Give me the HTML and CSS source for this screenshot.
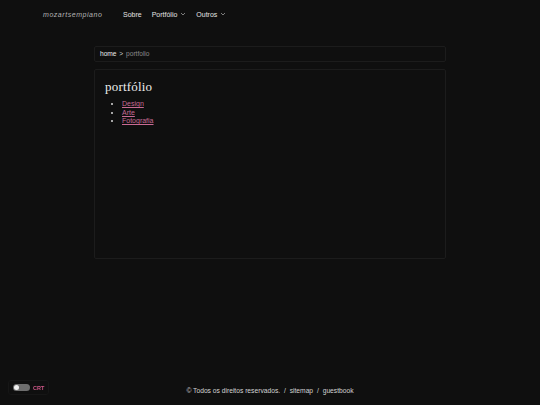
FILE: index.html
```html
<!DOCTYPE html>
<html lang="pt">
<head>
    <meta charset="UTF-8">
    <meta name="viewport" content="width=device-width, initial-scale=1.0">
    <title>portfólio</title>
    <link rel="stylesheet" href="styles.css">
</head>
<body>
    <header class="topo">
        <a class="logo" href="#">mozartsempiano</a>
        <nav class="menu">
            <a href="#">Sobre</a>
            <a href="#">Portfólio <svg class="seta" viewBox="0 0 6 4"><path d="M1 1l2 2 2-2" fill="none" stroke="#999" stroke-width="0.8"/></svg></a>
            <a href="#">Outros <svg class="seta" viewBox="0 0 6 4"><path d="M1 1l2 2 2-2" fill="none" stroke="#999" stroke-width="0.8"/></svg></a>
        </nav>
    </header>

    <main class="conteudo">
        <div class="caminho">
            <a href="#" class="caminho_home">home</a>
            <span class="caminho_sep">&gt;</span>
            <span class="caminho_atual">portfolio</span>
        </div>
        <section class="caixa">
            <h1>portfólio</h1>
            <ul class="lista">
                <li><a href="#">Design</a></li>
                <li><a href="#">Arte</a></li>
                <li><a href="#">Fotografia</a></li>
            </ul>
        </section>
    </main>

    <footer class="rodape">
        <span>&copy; Todos os direitos reservados.</span>
        <span class="barra">/</span>
        <a href="#">sitemap</a>
        <span class="barra">/</span>
        <a href="#">guestbook</a>
    </footer>

    <div class="crt">
        <span class="chave"><span class="bola"></span></span>
        <span class="crt_texto">CRT</span>
    </div>
</body>
</html>
```

FILE: styles.css
```css
html, body {
    height: 100%;
}
body {
    margin: 0;
    background-color: #0f0f0f;
    color: #d8d8d8;
    font-family: "Liberation Sans", Arial, sans-serif;
    font-size: 7px;
    display: flex;
    flex-direction: column;
}
a {
    color: inherit;
    text-decoration: none;
}
.topo {
    display: flex;
    align-items: center;
    height: 28px;
    padding-left: 43px;
}
.logo {
    font-style: italic;
    color: #b4b4b4;
    letter-spacing: 0.55px;
    width: 80px;
}
.menu {
    display: flex;
    gap: 10px;
}
.menu a {
    color: #e4e4e4;
}
.seta {
    width: 6px;
    height: 4px;
    margin-left: 1px;
    vertical-align: 1px;
}
.conteudo {
    width: 352px;
    margin: 18px auto 0;
}
.caminho {
    border: 1px solid #1c1c1c;
    border-radius: 2px;
    padding: 3px 5px;
    height: 8px;
    line-height: 8px;
    font-size: 6.6px;
}
.caminho_home {
    color: #ececec;
}
.caminho_sep {
    color: #cfcfcf;
    margin: 0 1px;
}
.caminho_atual {
    color: #8a8a8a;
}
.caixa {
    margin-top: 7px;
    border: 1px solid #1c1c1c;
    border-radius: 2px;
    height: 170px;
    padding: 9px 10px;
}
.caixa h1 {
    margin: 0 0 5px;
    font-family: "Liberation Serif", "Times New Roman", serif;
    font-weight: normal;
    font-size: 13px;
    letter-spacing: 0.2px;
    color: #ececec;
}
.lista {
    margin: 0;
    padding-left: 17px;
    line-height: 8.5px;
}
.lista a {
    color: #c86a94;
    text-decoration: underline;
}
.rodape {
    margin-top: auto;
    padding-bottom: 11px;
    text-align: center;
    color: #d4d4d4;
    font-size: 6.7px;
}
.barra {
    margin: 0 2px;
}
.crt {
    position: fixed;
    left: 8px;
    bottom: 10px;
    display: flex;
    align-items: center;
    gap: 3px;
    padding: 3px 4px;
    border: 1px solid #161616;
    border-radius: 3px;
}
.chave {
    display: block;
    width: 17px;
    height: 7px;
    border-radius: 4px;
    background-color: #6e6e6e;
    position: relative;
}
.bola {
    position: absolute;
    left: 1px;
    top: 1px;
    width: 5px;
    height: 5px;
    border-radius: 50%;
    background-color: #f0f0f0;
}
.crt_texto {
    color: #d0588a;
    font-size: 5.5px;
    font-weight: bold;
}
```
